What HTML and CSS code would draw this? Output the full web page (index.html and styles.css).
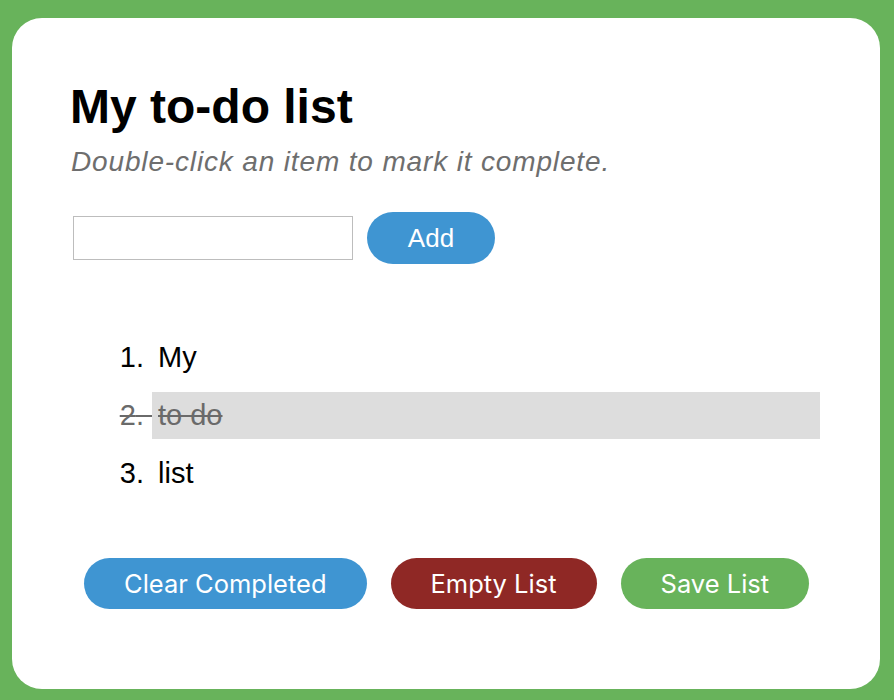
FILE: index.html
```html
<!DOCTYPE html>
<html lang="en">
<head>
<meta charset="utf-8">
<title>My to-do list</title>
<link rel="stylesheet" href="styles.css">
</head>
<body>
<main class="card">
  <h1 class="title">My to-do list</h1>
  <p class="hint">Double-click an item to mark it complete.</p>
  <form class="add-row">
    <input class="add-input" type="text" aria-label="New item">
    <button class="btn btn-add" type="button">Add</button>
  </form>
  <ol class="todo-list">
    <li class="todo-item">My</li>
    <li class="todo-item done">to do</li>
    <li class="todo-item">list</li>
  </ol>
  <div class="actions">
    <button class="btn btn-action btn-blue" type="button">Clear Completed</button>
    <button class="btn btn-action btn-red" type="button">Empty List</button>
    <button class="btn btn-action btn-green" type="button">Save List</button>
  </div>
</main>
</body>
</html>
```
FILE: styles.css
```css
html, body {
  margin: 0;
  padding: 0;
}
body {
  background: #68b35b;
  font-family: "Liberation Sans", Arial, sans-serif;
  min-height: 700px;
  padding-top: 18px;
  box-sizing: border-box;
}
.card {
  margin: 0 14px 0 12px;
  background: #ffffff;
  border-radius: 30px;
  padding: 61px 60px 80px 60px;
}
.title {
  margin: 0 0 0 -2px;
  font-size: 48px;
  line-height: 55px;
  font-weight: 700;
  color: #000;
}
.hint {
  margin: 12px 0 0 -1px;
  font-size: 28px;
  line-height: 32px;
  font-style: italic;
  color: #6e6e6e;
  letter-spacing: 0.85px;
}
.add-row {
  margin: 34px 0 0 0;
  display: flex;
  align-items: center;
  gap: 14px;
}
.add-input {
  width: 280px;
  height: 44px;
  box-sizing: border-box;
  border: 1px solid #bdbdbd;
  margin: 0 0 0 1px;
  padding: 0 8px;
  font-size: 20px;
}
.btn {
  border: none;
  color: #fff;
  cursor: pointer;
  border-radius: 999px;
}
.btn-add {
  background: #3f95d2;
  height: 52px;
  padding: 0 40px;
  font-family: "Liberation Sans", Arial, sans-serif;
  font-size: 26px;
  width: 128px;
}
.todo-list {
  margin: 70px 0 0 0;
  padding: 0 0 0 80px;
  list-style: none;
  counter-reset: todo;
}
.todo-item {
  position: relative;
  counter-increment: todo;
  font-size: 29px;
  line-height: 33px;
  padding: 7px 0 7px 6px;
  margin-bottom: 11px;
  color: #000;
}
.todo-item::before {
  content: counter(todo) ". ";
  white-space: pre;
  position: absolute;
  right: 100%;
  top: 7px;
}
.todo-item:last-child {
  margin-bottom: 0;
}
.todo-item.done {
  background: #dddddd;
  color: #6a6a6a;
  text-decoration: line-through;
}
.todo-item.done::before {
  text-decoration: line-through;
}
.actions {
  margin-top: 61px;
  display: flex;
  gap: 24px;
  padding-left: 12px;
}
.btn-action {
  height: 51px;
  padding: 0 40px;
  font-family: Inter, "Noto Sans", sans-serif;
  font-size: 25.5px;
}
.btn-blue { background: #3f95d2; }
.btn-red { background: #8f2825; }
.btn-green { background: #68b35b; }
```
